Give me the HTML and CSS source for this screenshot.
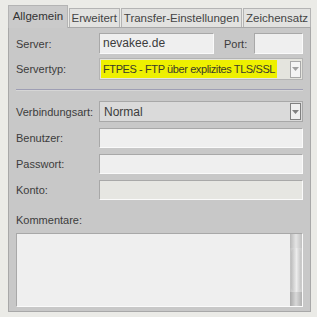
FILE: index.html
```html
<!DOCTYPE html>
<html>
<head>
<meta charset="utf-8">
<link rel="stylesheet" href="styles.css">
</head>
<body>
<div class="dialog">
  <div class="tabs">
    <div class="tab active tab-general">Allgemein</div>
    <div class="tab tab-advanced">Erweitert</div>
    <div class="tab tab-transfer">Transfer-Einstellungen</div>
    <div class="tab tab-charset">Zeichensatz</div>
  </div>
  <div class="panel">
    <div class="row row-server">
      <span class="label">Server:</span>
      <div class="input server-input">nevakee.de</div>
      <span class="port-label">Port:</span>
      <div class="input port-input"></div>
    </div>
    <div class="row row-type">
      <span class="label">Servertyp:</span>
      <div class="combo highlight">
        <span class="combo-text">FTPES - FTP über explizites TLS/SSL</span>
        <span class="arrow light"><svg width="7" height="4" viewBox="0 0 7 4"><path d="M0 0H7L3.5 4Z" fill="#a0a0a0"/></svg></span>
      </div>
    </div>
    <div class="separator"></div>
    <div class="row row-conn">
      <span class="label">Verbindungsart:</span>
      <div class="combo plain">
        <span class="combo-text">Normal</span>
        <span class="arrow"><svg width="7" height="4" viewBox="0 0 7 4"><path d="M0 0H7L3.5 4Z" fill="#808080"/></svg></span>
      </div>
    </div>
    <div class="row row-field">
      <span class="label">Benutzer:</span>
      <div class="input wide"></div>
    </div>
    <div class="row row-field">
      <span class="label">Passwort:</span>
      <div class="input wide"></div>
    </div>
    <div class="row row-field">
      <span class="label">Konto:</span>
      <div class="input wide disabled"></div>
    </div>
    <div class="comments-label">Kommentare:</div>
    <div class="textarea">
      <div class="scrollbar">
        <div class="sb-top"></div>
        <div class="sb-thumb"></div>
        <div class="sb-bottom"></div>
      </div>
    </div>
  </div>
</div>
</body>
</html>
```
FILE: styles.css
```css
html, body {
  margin: 0;
  padding: 0;
}
body {
  background: #ebebe7;
  font-family: "Liberation Sans", Arial, sans-serif;
  font-size: 11px;
  color: #3c3c3c;
  width: 317px;
  height: 317px;
  overflow: hidden;
  white-space: nowrap;
}
.dialog {
  margin: 5px 6px 0 8px;
}
.tabs {
  display: flex;
  align-items: flex-end;
  height: 22px;
  gap: 1px;
  position: relative;
  z-index: 1;
}
.tab {
  height: 19px;
  line-height: 18px;
  text-align: center;
  background: #e2e2e0;
  border: 1px solid #b4b4b4;
  border-bottom: none;
  box-sizing: border-box;
  color: #444;
  font-size: 11.5px;
}
.tab-general { width: 60px; }
.tab-advanced { width: 51px; }
.tab-transfer { width: 122px; }
.tab-charset { width: 68px; }
.tab.active {
  height: 23px;
  line-height: 21px;
  background: #cacaca;
  margin-bottom: -1px;
  color: #333;
}
.panel {
  background: #c8c8c8;
  border: 1px solid #a8a8a8;
  height: 285px;
  box-sizing: border-box;
  padding: 5px 7px 0 7px;
}
.row {
  display: flex;
  align-items: center;
}
.row-server {
  height: 21px;
}
.row-type {
  height: 22px;
  margin-top: 4px;
}
.row-conn {
  height: 21px;
}
.row-field {
  height: 20px;
  margin-top: 6px;
}
.label {
  width: 83px;
  flex: none;
  font-size: 11px;
}
.input {
  height: 21px;
  box-sizing: border-box;
  background: #efefef;
  border: 1px solid #a8a8a8;
  border-right-color: #fafafa;
  border-bottom-color: #fafafa;
  padding-left: 3px;
  line-height: 19px;
  font-size: 12px;
}
.server-input {
  width: 115px;
}
.port-label {
  margin-left: 10px;
  width: 30px;
  font-size: 11px;
}
.port-input {
  width: 49px;
}
.wide {
  flex: 1;
  height: 20px;
}
.disabled {
  background: #e6e6e2;
}
.combo {
  flex: 1;
  height: 22px;
  box-sizing: border-box;
  display: flex;
  align-items: center;
  justify-content: space-between;
  border: 1px solid #a8a8a8;
  padding: 0 1px 0 1px;
}
.combo.highlight {
  background: #e4e4de;
  border-color: #b4b4b4;
}
.combo.highlight .combo-text {
  background: #eef000;
  color: #3a3a2a;
  padding: 3px 2px;
  font-size: 11px;
  letter-spacing: -0.4px;
}
.combo.plain {
  background: #dadada;
  height: 21px;
  padding-left: 4px;
  font-size: 12px;
}
.arrow {
  width: 11px;
  height: 17px;
  box-sizing: border-box;
  border: 1px solid #808080;
  background: #efefef;
  display: flex;
  align-items: center;
  justify-content: center;
}
.arrow.light {
  border-color: #a8a8a8;
  background: #f4f4f4;
}
.separator {
  height: 1px;
  background: #9e9eb4;
  border-bottom: 1px solid #d6d6d6;
  margin: 9px 0 10px 0;
}
.comments-label {
  margin-top: 12px;
  height: 16px;
  line-height: 16px;
  font-size: 11px;
}
.textarea {
  margin-top: 5px;
  height: 74px;
  box-sizing: border-box;
  background: #efefef;
  border: 1px solid #a8a8a8;
  border-right-color: #fafafa;
  border-bottom-color: #fafafa;
  display: flex;
  justify-content: flex-end;
}
.scrollbar {
  width: 12px;
  display: flex;
  flex-direction: column;
  background: linear-gradient(to right, #c0c0c0, #e8e8e8 50%, #c8c8c8);
}
.sb-top {
  height: 14px;
  background: linear-gradient(to right, #b8b8b8, #e4e4e4, #c0c0c0);
}
.sb-thumb {
  flex: 1;
  margin: 0 1px;
  border-radius: 5px;
  background: linear-gradient(to right, #bdbdbd, #ececec 55%, #c4c4c4);
}
.sb-bottom {
  height: 14px;
  background: linear-gradient(to right, #a8a8a8, #d8d8d8, #b0b0b0);
}
```
